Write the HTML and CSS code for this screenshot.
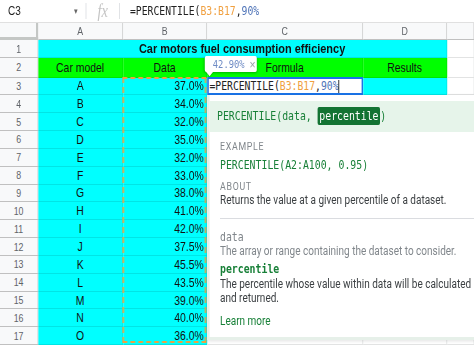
FILE: index.html
```html
<!DOCTYPE html>
<html lang="en">
<head>
    <meta charset="UTF-8">
    <title>Car motors fuel consumption efficiency</title>
    <link rel="stylesheet" href="styles.css">
</head>
<body>
<div class="page">
    <div class="formula-bar">
        <div class="name-box">C3<span class="caret">&#9662;</span></div>
        <div class="fx">fx</div>
        <div class="formula-text mono">=PERCENTILE(<span class="ref">B3:B17</span>,<span class="num">90%</span></div>
    </div>

    <div class="sheet">
        <div class="corner"></div>
        <div class="col-head">A</div>
        <div class="col-head">B</div>
        <div class="col-head">C</div>
        <div class="col-head">D</div>
        <div class="col-head"></div>

        <div class="row-head">1</div>
        <div class="cell title">Car motors fuel consumption efficiency</div>
        <div class="cell"></div>

        <div class="row-head">2</div>
        <div class="cell green center">Car model</div>
        <div class="cell green center">Data</div>
        <div class="cell green center">Formula</div>
        <div class="cell green center">Results</div>
        <div class="cell"></div>

        <div class="row-head">3</div>
        <div class="cell cyan center">A</div>
        <div class="cell cyan right">37.0%</div>
        <div class="cell"></div>
        <div class="cell cyan"></div>
        <div class="cell"></div>

        <div class="row-head">4</div><div class="cell cyan center">B</div><div class="cell cyan right">34.0%</div><div class="cell"></div><div class="cell"></div><div class="cell"></div>
        <div class="row-head">5</div><div class="cell cyan center">C</div><div class="cell cyan right">32.0%</div><div class="cell"></div><div class="cell"></div><div class="cell"></div>
        <div class="row-head">6</div><div class="cell cyan center">D</div><div class="cell cyan right">35.0%</div><div class="cell"></div><div class="cell"></div><div class="cell"></div>
        <div class="row-head">7</div><div class="cell cyan center">E</div><div class="cell cyan right">32.0%</div><div class="cell"></div><div class="cell"></div><div class="cell"></div>
        <div class="row-head">8</div><div class="cell cyan center">F</div><div class="cell cyan right">33.0%</div><div class="cell"></div><div class="cell"></div><div class="cell"></div>
        <div class="row-head">9</div><div class="cell cyan center">G</div><div class="cell cyan right">38.0%</div><div class="cell"></div><div class="cell"></div><div class="cell"></div>
        <div class="row-head">10</div><div class="cell cyan center">H</div><div class="cell cyan right">41.0%</div><div class="cell"></div><div class="cell"></div><div class="cell"></div>
        <div class="row-head">11</div><div class="cell cyan center">I</div><div class="cell cyan right">42.0%</div><div class="cell"></div><div class="cell"></div><div class="cell"></div>
        <div class="row-head">12</div><div class="cell cyan center">J</div><div class="cell cyan right">37.5%</div><div class="cell"></div><div class="cell"></div><div class="cell"></div>
        <div class="row-head">13</div><div class="cell cyan center">K</div><div class="cell cyan right">45.5%</div><div class="cell"></div><div class="cell"></div><div class="cell"></div>
        <div class="row-head">14</div><div class="cell cyan center">L</div><div class="cell cyan right">43.5%</div><div class="cell"></div><div class="cell"></div><div class="cell"></div>
        <div class="row-head">15</div><div class="cell cyan center">M</div><div class="cell cyan right">39.0%</div><div class="cell"></div><div class="cell"></div><div class="cell"></div>
        <div class="row-head">16</div><div class="cell cyan center">N</div><div class="cell cyan right">40.0%</div><div class="cell"></div><div class="cell"></div><div class="cell"></div>
        <div class="row-head">17</div><div class="cell cyan center">O</div><div class="cell cyan right">36.0%</div><div class="cell"></div><div class="cell"></div><div class="cell"></div>

        <!-- overlays -->
        <div class="copy-range"></div>

        <div class="preview">
            <span class="preview-value">42.90%</span><span class="preview-close">&times;</span>
        </div>

        <div class="edit-cell mono">=PERCENTILE(<span class="ref">B3:B17</span>,<span class="num">90%</span><span class="cursor"></span></div>

        <div class="help">
            <div class="help-head">PERCENTILE(data, <span class="arg-on">percentile</span>)</div>
            <div class="help-body">
                <div class="label first">EXAMPLE</div>
                <div class="code">PERCENTILE(A2:A100, 0.95)</div>
                <div class="label about">ABOUT</div>
                <div class="desc">Returns the value at a given percentile of a dataset.</div>
                <div class="divider"></div>
                <div class="arg">data</div>
                <div class="desc muted">The array or range containing the dataset to consider.</div>
                <div class="arg active">percentile</div>
                <div class="desc lines">The percentile whose value within data will be calculated<br>and returned.</div>
                <div class="learn">Learn more</div>
            </div>
        </div>
    </div>
</div>
</body>
</html>
```

FILE: styles.css
```css
html, body {
    margin: 0;
    padding: 0;
    background: #fff;
    overflow: hidden;
}
.page {
    width: 592.5px;
    height: 346px;
    overflow: hidden;
    transform: scaleX(0.8);
    transform-origin: 0 0;
    font-family: "Liberation Sans", Arial, sans-serif;
    color: #111;
}
.mono {
    font-family: "DejaVu Sans Mono", monospace;
    font-size: 12.2px;
    color: #222;
    white-space: nowrap;
}

/* formula bar */
.formula-bar {
    display: flex;
    height: 22px;
    border-bottom: 1px solid #e0e0e0;
    align-items: center;
}
.name-box {
    flex: none;
    width: 107.5px;
    box-sizing: border-box;
    padding-left: 10px;
    font-size: 12.5px;
    color: #222;
    position: relative;
    height: 16px;
    line-height: 16px;
    border-right: 1px solid #dadce0;
}
.caret {
    position: absolute;
    left: 92px;
    top: 0;
    font-size: 9px;
    color: #666;
}
.fx {
    flex: none;
    width: 42.5px;
    box-sizing: border-box;
    height: 16px;
    line-height: 16px;
    text-align: center;
    font-family: "Liberation Serif", serif;
    font-style: italic;
    font-size: 18px;
    color: #c4c4c4;
    border-right: 1px solid #dadce0;
}
.formula-text {
    flex: none;
    padding-left: 12.5px;
}
.ref { color: #f0a040; }
.num { color: #4f74b8; }

/* grid */
.sheet {
    position: relative;
    display: grid;
    grid-template-columns: 47.5px 106.25px 105px 195px 105px 1fr;
    grid-template-rows: 17px 18px 19.5px repeat(15, 17.85px);
    font-size: 13px;
}
.corner {
    background: #f8f9fa;
    border-right: 3.75px solid #c4c7c5;
    border-bottom: 3px solid #c4c7c5;
}
.col-head,
.row-head {
    background: #f8f9fa;
    border-right: 1px solid #c0c0c0;
    border-bottom: 1px solid #c0c0c0;
    color: #5f6368;
    font-size: 11px;
    display: flex;
    align-items: center;
    justify-content: center;
}
.cell {
    border-right: 1px solid #e2e3e3;
    border-bottom: 1px solid #e2e3e3;
    display: flex;
    align-items: center;
    padding: 0 3px;
    white-space: nowrap;
    overflow: hidden;
}
.cyan {
    background: #00ffff;
    border-color: rgba(0, 0, 0, 0.1);
}
.green {
    background: #00ff00;
    border-color: rgba(0, 0, 0, 0.1);
}
.title {
    grid-column: span 4;
    background: #00ffff;
    border-color: rgba(0, 0, 0, 0.1);
    justify-content: center;
    font-weight: bold;
    font-size: 13.7px;
}
.center { justify-content: center; }
.right { justify-content: flex-end; }

/* dashed copy range B3:B17 */
.copy-range {
    position: absolute;
    left: 153px;
    top: 54px;
    width: 105px;
    height: 266px;
    box-sizing: border-box;
    border: 2px dashed #f0a040;
}

/* value preview */
.preview {
    position: absolute;
    left: 256px;
    top: 33px;
    width: 65px;
    height: 16px;
    box-sizing: border-box;
    background: #fff;
    border-radius: 2px;
    box-shadow: 0 1px 3px rgba(0, 0, 0, 0.3);
    display: flex;
    align-items: center;
    padding-left: 10px;
    font-family: "DejaVu Sans Mono", monospace;
    font-size: 11px;
}
.preview::after {
    content: "";
    position: absolute;
    left: 3px;
    bottom: -3px;
    width: 6px;
    height: 6px;
    background: #fff;
    transform: rotate(45deg);
    box-shadow: 1px 1px 1px rgba(0, 0, 0, 0.15);
}
.preview-value { color: #6d8ac4; }
.preview-close {
    margin-left: 6px;
    color: #9aa0a6;
    font-family: "Liberation Sans", Arial, sans-serif;
    font-size: 13px;
}

/* in-cell editor */
.edit-cell {
    position: absolute;
    left: 258.75px;
    top: 54px;
    width: 195px;
    height: 18px;
    box-sizing: border-box;
    background: #fff;
    border: 2px solid #1a73e8;
    border-left-width: 2.5px;
    border-right-width: 2.5px;
    display: flex;
    align-items: center;
    padding-left: 1px;
}
.cursor {
    width: 1px;
    height: 13px;
    background: #000;
}

/* function help */
.help {
    position: absolute;
    left: 258.75px;
    top: 72px;
    width: 340px;
    height: 245px;
    box-sizing: border-box;
    background: #fff;
    border-left: 3px solid #e6f0e9;
    border-bottom: 3px solid #e6f0e9;
    padding-top: 6px;
    box-shadow: 0 1px 4px rgba(0, 0, 0, 0.12);
    white-space: nowrap;
}
.help-head {
    height: 31px;
    line-height: 31px;
    background: #e6f4ea;
    padding-left: 9.5px;
    font-family: "DejaVu Sans Mono", monospace;
    font-size: 12.3px;
    color: #188038;
}
.arg-on {
    background: #137333;
    color: #fff;
    padding: 2px 2px;
    border-radius: 2px;
}
.help-body {
    padding-left: 13.25px;
    font-family: Roboto, "Liberation Sans", sans-serif;
}
.label {
    font-size: 11px;
    letter-spacing: 0.9px;
    color: #80868b;
    line-height: 14px;
}
.label.first { margin-top: 7.5px; }
.label.about { margin-top: 7px; line-height: 13px; }
.code {
    margin-top: 3.5px;
    line-height: 16px;
    font-family: "DejaVu Sans Mono", monospace;
    font-size: 12.3px;
    color: #188038;
}
.desc {
    font-size: 12.5px;
    line-height: 14px;
    color: #3c4043;
}
.desc.muted { color: #80868b; }
.desc.lines { margin-top: 1px; line-height: 13.5px; }
.divider {
    margin-top: 10.5px;
    height: 1px;
    background: #dadce0;
}
.arg {
    margin-top: 11px;
    line-height: 14px;
    font-family: "DejaVu Sans Mono", monospace;
    font-size: 12.3px;
    color: #80868b;
}
.arg.active {
    margin-top: 4.5px;
    color: #188038;
    font-weight: bold;
}
.learn {
    margin-top: 10px;
    line-height: 14px;
    font-size: 12.5px;
    color: #188038;
}
```
